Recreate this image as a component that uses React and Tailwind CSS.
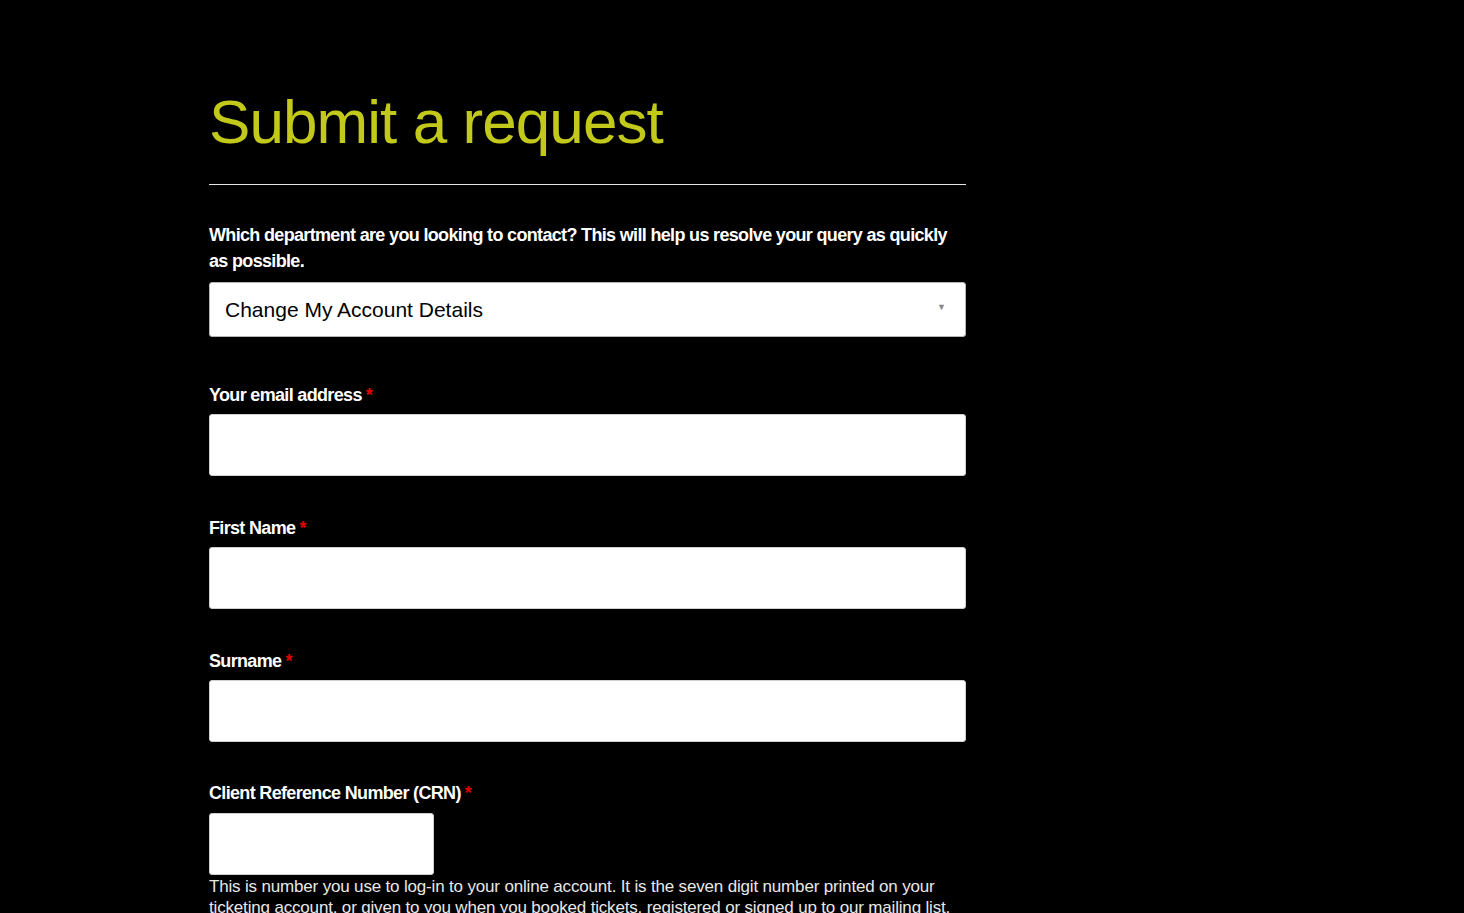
import { useState } from "react";

const Label = ({ children, required }) => (
  <label className="block text-[18px] leading-[26px] font-bold tracking-[-0.037em] text-white">
    {children}
    {required && <span className="ml-[4px] text-[#e00000]">*</span>}
  </label>
);

const Field = ({ label }) => (
  <div className="mt-[39px]">
    <Label required>{label}</Label>
    <input
      type="text"
      className="mt-[6px] block h-[62px] w-full rounded-[3px] border border-[#cfcfcf] bg-white px-4 text-[18px] text-black outline-none"
    />
  </div>
);

export default function App() {
  const [department, setDepartment] = useState("account");

  return (
    <div
      className="min-h-screen bg-black"
      style={{ fontFamily: '"Liberation Sans", Arial, sans-serif' }}
    >
      <div className="ml-[209px] w-[757px] pt-[86px] pb-24">
        {/* Title */}
        <h1 className="text-[62px] leading-[72px] font-normal tracking-[-0.015em] text-[#c2c91a]">
          Submit a request
        </h1>
        <div className="mt-[26px] h-px bg-[#e6e6e6]" />

        {/* Department */}
        <div className="mt-[37px]">
          <Label>
            Which department are you looking to contact? This will help us
            resolve your query as quickly as possible.
          </Label>
          <div className="relative mt-[8px]">
            <select
              value={department}
              onChange={(e) => setDepartment(e.target.value)}
              className="block h-[55px] w-full appearance-none rounded-[3px] border border-[#b5b5b5] bg-white pl-[15px] text-[21px] text-black outline-none"
            >
              <option value="account">Change My Account Details</option>
              <option value="booking">Booking Enquiry</option>
              <option value="other">Other</option>
            </select>
            <span className="pointer-events-none absolute right-[20px] top-[19px] text-[9px] text-[#888]">
              ▼
            </span>
          </div>
        </div>

        {/* Fields */}
        <div className="flex flex-col pt-[6px]">
          <Field label="Your email address" />
          <Field label="First Name" />
          <Field label="Surname" />
          <div className="mt-[38px]">
            <Label required>Client Reference Number (CRN)</Label>
            <input
              type="text"
              className="mt-[7px] block h-[62px] w-[225px] rounded-[3px] border border-[#cfcfcf] bg-white px-4 text-[18px] outline-none"
            />
            <p className="mt-[1px] text-[17px] leading-[21px] tracking-[-0.01em] text-[#e8e8e8]">
              This is number you use to log-in to your online account. It is
              the seven digit number printed on your ticketing account, or
              given to you when you booked tickets, registered or signed up to
              our mailing list.
            </p>
          </div>
        </div>
      </div>
    </div>
  );
}
